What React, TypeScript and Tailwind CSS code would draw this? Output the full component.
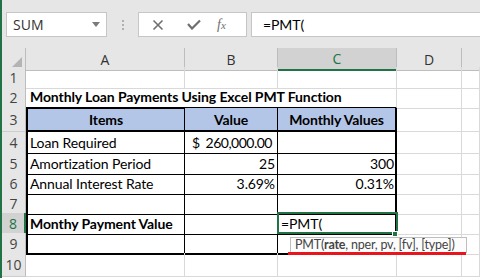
import React from "react";

const cols = "grid grid-cols-[24px_159px_93px_119px_65px_1fr]";
const cellFont = "font-['Lato',sans-serif] text-[14px] leading-[17px] tracking-[-0.1px]";
const uiFont = "font-['Open_Sans','Noto_Sans',sans-serif]";

type B = "g" | "k" | "K" | "n";

const rightCls: Record<B, string> = {
  g: "border-r border-r-[#d9d9d9]",
  k: "border-r border-r-black",
  K: "border-r-2 border-r-black",
  n: "border-r-0",
};

const bottomCls: Record<B, string> = {
  g: "border-b border-b-[#d9d9d9]",
  k: "border-b border-b-black",
  K: "border-b-2 border-b-black",
  n: "border-b-0",
};

function Cell({
  children,
  r = "g",
  b = "g",
  className = "",
}: {
  children?: React.ReactNode;
  r?: B;
  b?: B;
  className?: string;
}) {
  return (
    <div
      className={`flex items-end whitespace-nowrap pb-[2px] text-black ${cellFont} ${rightCls[r]} ${bottomCls[b]} ${className}`}
    >
      {children}
    </div>
  );
}

function RowHead({ n, active = false }: { n: number; active?: boolean }) {
  return (
    <div
      className={`flex items-center justify-center border-b border-b-[#cdcdcd] text-[14px] ${uiFont} ${
        active
          ? "border-r-2 border-r-[#217346] bg-[#d2d2d2] text-[#217346]"
          : "border-r border-r-[#bdbdbd] bg-[#e6e6e6] text-[#444]"
      }`}
    >
      {n}
    </div>
  );
}

function EmptyRow({ n, h }: { n: number; h: string }) {
  return (
    <div className={`${cols} ${h}`}>
      <RowHead n={n} />
      <Cell />
      <Cell />
      <Cell />
      <Cell />
      <Cell />
    </div>
  );
}

function FormulaBar() {
  return (
    <div className={`flex h-[48px] items-start bg-[#e6e6e6] pt-[12px] ${uiFont}`}>
      <div className="ml-[4px] flex h-[25px] w-[101px] items-center justify-between border border-[#c6c6c6] bg-white pl-[6px] pr-[6px] text-[14px] text-[#333]">
        <span>SUM</span>
        <svg width="8" height="5" viewBox="0 0 8 5">
          <path d="M0 0h8L4 5z" fill="#7a7a7a" />
        </svg>
      </div>
      <div className="flex h-[25px] w-[31px] flex-col items-center justify-center gap-[2px]">
        <span className="h-[2px] w-[2px] bg-[#b0b0b0]" />
        <span className="h-[2px] w-[2px] bg-[#b0b0b0]" />
        <span className="h-[2px] w-[2px] bg-[#b0b0b0]" />
      </div>
      <div className="flex h-[25px] w-[109px] items-center border border-[#c6c6c6] bg-white">
        <svg className="ml-[13px]" width="12" height="12" viewBox="0 0 12 12">
          <path d="M1.5 1.5l9 9M10.5 1.5l-9 9" stroke="#6f6f6f" strokeWidth="1.6" />
        </svg>
        <svg className="ml-[23px]" width="14" height="11" viewBox="0 0 14 11">
          <path d="M1 5l4 4.5L13 1.5" stroke="#6f6f6f" strokeWidth="2.2" fill="none" />
        </svg>
        <span className="ml-[16px] font-['Liberation_Serif',serif] text-[14px] italic text-[#6f6f6f]">
          f<span className="text-[11px]">x</span>
        </span>
      </div>
      <div className="ml-[4px] flex h-[25px] flex-1 items-center border border-r-0 border-[#c6c6c6] bg-white pl-[11px] text-black">
        <span className={cellFont}>=PMT(</span>
      </div>
    </div>
  );
}

function ColHeaders() {
  const base = `flex items-center justify-center text-[14px] ${uiFont}`;
  return (
    <div className={`${cols} h-[19px]`}>
      <div className="flex items-end justify-end border-b border-r border-[#bdbdbd] bg-[#e6e6e6] pb-[2px] pr-[3px]">
        <svg width="11" height="11" viewBox="0 0 11 11">
          <path d="M11 0v11H0z" fill="#b4b4b4" />
        </svg>
      </div>
      <div className={`${base} border-b border-r border-[#bdbdbd] bg-[#e6e6e6] text-[#333]`}>A</div>
      <div className={`${base} border-b border-r border-[#bdbdbd] bg-[#e6e6e6] text-[#333]`}>B</div>
      <div className={`${base} border-b-2 border-r border-b-[#217346] border-r-[#bdbdbd] bg-[#d2d2d2] text-[#217346]`}>
        C
      </div>
      <div className={`${base} border-b border-r border-[#bdbdbd] bg-[#e6e6e6] text-[#333]`}>D</div>
      <div className={`${base} border-b border-[#bdbdbd] bg-[#e6e6e6]`} />
    </div>
  );
}

export default function App() {
  return (
    <div className="relative h-[278px] w-[480px] overflow-hidden border-l-2 border-[#217346] bg-white">
      <FormulaBar />
      <ColHeaders />

      <EmptyRow n={1} h="h-[20px]" />

      <div className={`${cols} h-[21px]`}>
        <RowHead n={2} />
        <Cell r="n" b="K" className="z-10 overflow-visible pl-[4px] font-bold">
          Monthly Loan Payments Using Excel PMT Function
        </Cell>
        <Cell r="n" b="K" />
        <Cell b="K" />
        <Cell />
        <Cell />
      </div>

      <div className={`${cols} h-[24px]`}>
        <RowHead n={3} />
        <Cell r="k" b="K" className="justify-center border-l-2 border-l-black bg-[#b4c6e7] font-bold">
          Items
        </Cell>
        <Cell r="k" b="K" className="justify-center bg-[#b4c6e7] font-bold">
          Value
        </Cell>
        <Cell r="K" b="K" className="justify-center bg-[#b4c6e7] font-bold">
          Monthly Values
        </Cell>
        <Cell />
        <Cell />
      </div>

      <div className={`${cols} h-[21px]`}>
        <RowHead n={4} />
        <Cell r="k" b="k" className="border-l-2 border-l-black pl-[2px]">
          Loan Required
        </Cell>
        <Cell r="k" b="k" className="justify-between pl-[7px] pr-[5px]">
          <span>$</span>
          <span className="tracking-[-0.5px]">260,000.00</span>
        </Cell>
        <Cell r="K" b="k" />
        <Cell />
        <Cell />
      </div>

      <div className={`${cols} h-[20px]`}>
        <RowHead n={5} />
        <Cell r="k" b="k" className="border-l-2 border-l-black pl-[2px]">
          Amortization Period
        </Cell>
        <Cell r="k" b="k" className="justify-end pr-[2px]">
          25
        </Cell>
        <Cell r="K" b="k" className="justify-end pr-[1px]">
          300
        </Cell>
        <Cell />
        <Cell />
      </div>

      <div className={`${cols} h-[20px]`}>
        <RowHead n={6} />
        <Cell r="k" b="k" className="border-l-2 border-l-black pl-[2px]">
          Annual Interest Rate
        </Cell>
        <Cell r="k" b="k" className="justify-end pr-[2px]">
          3.69%
        </Cell>
        <Cell r="K" b="k" className="justify-end pr-[1px]">
          0.31%
        </Cell>
        <Cell />
        <Cell />
      </div>

      <div className={`${cols} h-[20px]`}>
        <RowHead n={7} />
        <Cell r="k" b="k" className="border-l-2 border-l-black" />
        <Cell r="k" b="k" />
        <Cell r="K" b="k" />
        <Cell />
        <Cell />
      </div>

      <div className={`${cols} h-[20px]`}>
        <RowHead n={8} active />
        <Cell r="k" b="k" className="border-l-2 border-l-black pl-[2px] font-bold">
          Monthy Payment Value
        </Cell>
        <Cell r="k" b="k" />
        <Cell r="K" b="k" className="relative pl-[3px]">
          =PMT(
          <div className="absolute -left-px -top-px h-[22px] w-[121px] border-2 border-[#217346]" />
          <div className="absolute -bottom-[3px] -right-[3px] h-[6px] w-[6px] border border-white bg-[#217346]" />
        </Cell>
        <Cell />
        <Cell />
      </div>

      <div className={`${cols} h-[20px]`}>
        <RowHead n={9} />
        <Cell r="k" b="K" className="border-l-2 border-l-black" />
        <Cell r="k" b="K" />
        <Cell r="K" b="K" />
        <Cell />
        <Cell />
      </div>

      <EmptyRow n={10} h="h-[24px]" />

      {/* function argument tooltip */}
      <div className="absolute left-[288px] top-[237px] flex h-[16px] w-[177px] items-center whitespace-nowrap border border-[#bebebe] bg-[#fcfcfc] pl-[4px] font-['Lato',sans-serif] text-[12.5px] leading-none tracking-[-0.2px] text-[#444]">
        <span>
          PMT(<b className="font-bold">rate</b>, nper, pv, [fv], [type])
        </span>
      </div>
      <div className="absolute left-[286px] top-[252px] h-[3px] w-[178px] bg-[#e8161c]" />
    </div>
  );
}
